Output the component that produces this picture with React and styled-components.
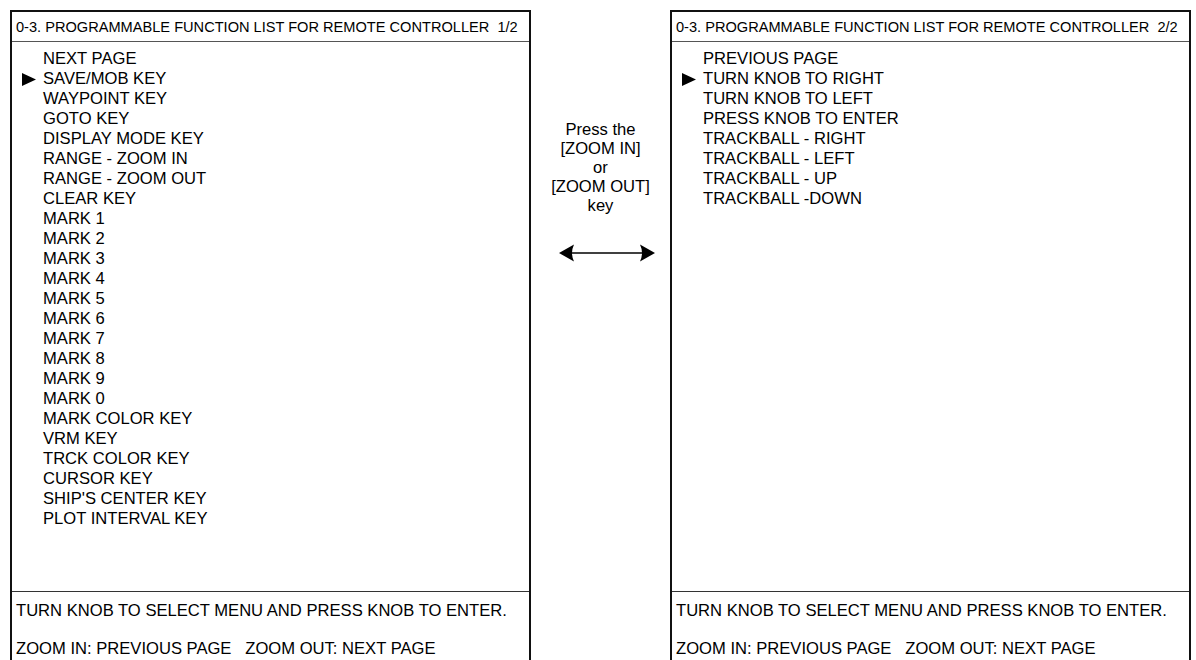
import React from 'react'
import styled, { createGlobalStyle } from 'styled-components';

const pageOne = [
  'NEXT PAGE', 'SAVE/MOB KEY', 'WAYPOINT KEY', 'GOTO KEY', 'DISPLAY MODE KEY',
  'RANGE - ZOOM IN', 'RANGE - ZOOM OUT', 'CLEAR KEY', 'MARK 1', 'MARK 2', 'MARK 3',
  'MARK 4', 'MARK 5', 'MARK 6', 'MARK 7', 'MARK 8', 'MARK 9', 'MARK 0',
  'MARK COLOR KEY', 'VRM KEY', 'TRCK COLOR KEY', 'CURSOR KEY', "SHIP'S CENTER KEY",
  'PLOT INTERVAL KEY'
];

const pageTwo = [
  'PREVIOUS PAGE', 'TURN KNOB TO RIGHT', 'TURN KNOB TO LEFT', 'PRESS KNOB TO ENTER',
  'TRACKBALL - RIGHT', 'TRACKBALL - LEFT', 'TRACKBALL - UP', 'TRACKBALL -DOWN'
];

function Screen({page, items}) {
  return (
    <Panel>
      <Header>0-3. PROGRAMMABLE FUNCTION LIST FOR REMOTE CONTROLLER&nbsp;&nbsp;{page}/2</Header>
      <List>
        {items.map((item, i) => (
          <Item key={item}>
            <Cursor>
              {i === 1 && (
                <svg width="14" height="13" viewBox="0 0 14 13">
                  <path d="M0 0 L14 6.5 L0 13 Z" fill="#000" />
                </svg>
              )}
            </Cursor>
            {item}
          </Item>
        ))}
      </List>
      <Footer>
        <FootLine>TURN KNOB TO SELECT MENU AND PRESS KNOB TO ENTER.</FootLine>
        <FootLine>ZOOM IN: PREVIOUS PAGE&nbsp;&nbsp;&nbsp;ZOOM OUT: NEXT PAGE</FootLine>
      </Footer>
    </Panel>
  )
}

export default function App() {
  return (
    <>
      <Global />
      <Page>
        <Screen page={1} items={pageOne} />
        <Middle>
          <Note>Press the<br />[ZOOM IN]<br />or<br />[ZOOM OUT]<br />key</Note>
          <Arrow width="96" height="20" viewBox="0 0 96 20">
            <line x1="8" y1="10" x2="88" y2="10" stroke="#000" strokeWidth="1.6" />
            <path d="M0 10 L15 1.5 Q11 10 15 18.5 Z" fill="#000" />
            <path d="M96 10 L81 1.5 Q85 10 81 18.5 Z" fill="#000" />
          </Arrow>
        </Middle>
        <Screen page={2} items={pageTwo} />
      </Page>
    </>
  )
}

const Global = createGlobalStyle`
  body {
    margin: 0;
    background: #fff;
    font-family: "Liberation Sans", Arial, sans-serif;
    color: #000;
  }
`;

const Page = styled.div`
  display: flex;
  height: 660px;
  padding: 10px 0 0 10px;
  box-sizing: border-box;
  overflow: hidden;
`;

const Panel = styled.div`
  width: 521px;
  height: 660px;
  box-sizing: border-box;
  border: 2px solid #111;
  border-bottom: none;
  display: flex;
  flex-direction: column;
`;

const Header = styled.div`
  height: 29px;
  border-bottom: 1px solid #555;
  font-size: 14.6px;
  line-height: 30px;
  padding-left: 4px;
  white-space: nowrap;
  overflow: hidden;
`;

const List = styled.div`
  flex: 1;
  padding-top: 7px;
`;

const Item = styled.div`
  display: flex;
  align-items: center;
  height: 20px;
  font-size: 16.6px;
  white-space: nowrap;
`;

const Cursor = styled.span`
  display: flex;
  align-items: center;
  width: 31px;
  padding-left: 10px;
  box-sizing: border-box;
`;

const Footer = styled.div`
  height: 79px;
  border-top: 1px solid #333;
  padding: 9px 0 0 4px;
  box-sizing: border-box;
  font-size: 16.6px;
  white-space: nowrap;
`;

const FootLine = styled.div`
  height: 38px;
`;

const Middle = styled.div`
  width: 139px;
  display: flex;
  flex-direction: column;
  align-items: center;
  padding-top: 110px;
`;

const Note = styled.div`
  font-size: 16.6px;
  line-height: 19px;
  text-align: center;
  margin-bottom: 28px;
`;

const Arrow = styled.svg`
  margin-left: 12px;
`;
